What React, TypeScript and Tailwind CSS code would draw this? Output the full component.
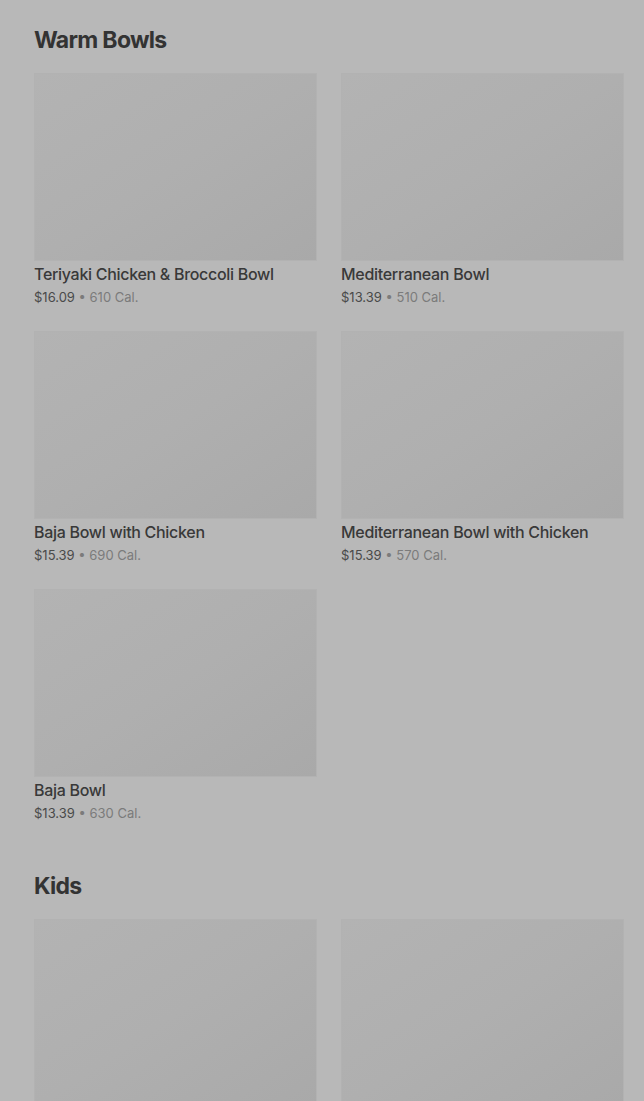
import React from 'react';

type Item = { name: string; price: string; cal: string };

const sections: { title: string; items: Item[] }[] = [
  {
    title: 'Warm Bowls',
    items: [
      { name: 'Teriyaki Chicken & Broccoli Bowl', price: '$16.09', cal: '610 Cal.' },
      { name: 'Mediterranean Bowl', price: '$13.39', cal: '510 Cal.' },
      { name: 'Baja Bowl with Chicken', price: '$15.39', cal: '690 Cal.' },
      { name: 'Mediterranean Bowl with Chicken', price: '$15.39', cal: '570 Cal.' },
      { name: 'Baja Bowl', price: '$13.39', cal: '630 Cal.' },
    ],
  },
  {
    title: 'Kids',
    items: [
      { name: 'Kids Meal', price: '$6.99', cal: '400 Cal.' },
      { name: 'Kids Bowl', price: '$6.99', cal: '380 Cal.' },
    ],
  },
];

function MenuCard({ item }: { item: Item }) {
  return (
    <div className="flex flex-col">
      <div className="h-[188px] border border-[#b2b2b2] bg-gradient-to-br from-[#b3b3b3] via-[#afafaf] to-[#a9a9a9]" />
      <div className="mt-[3px] text-[16px] leading-[20px] font-medium text-[#393939] tracking-[-0.3px]">
        {item.name}
      </div>
      <div className="mt-[5px] text-[13px] leading-[17px] text-[#4a4a4a]">
        {item.price}
        <span className="text-[#7b7b7b]"> • {item.cal}</span>
      </div>
    </div>
  );
}

export default function App() {
  return (
    <div
      className="h-[1101px] overflow-hidden bg-[#b8b8b8] pl-[34px] pr-[20px] pt-[25px]"
      style={{ fontFamily: 'Inter, "Noto Sans", sans-serif' }}
    >
      {sections.map((s) => (
        <section key={s.title} className="mb-[49px]">
          <h2 className="text-[23px] leading-[30px] font-bold text-[#333333] tracking-[-0.7px]">
            {s.title}
          </h2>
          <div className="mt-[18px] grid grid-cols-2 gap-x-[24px] gap-y-[25px]">
            {s.items.map((it) => (
              <MenuCard key={it.name} item={it} />
            ))}
          </div>
        </section>
      ))}
    </div>
  );
}
